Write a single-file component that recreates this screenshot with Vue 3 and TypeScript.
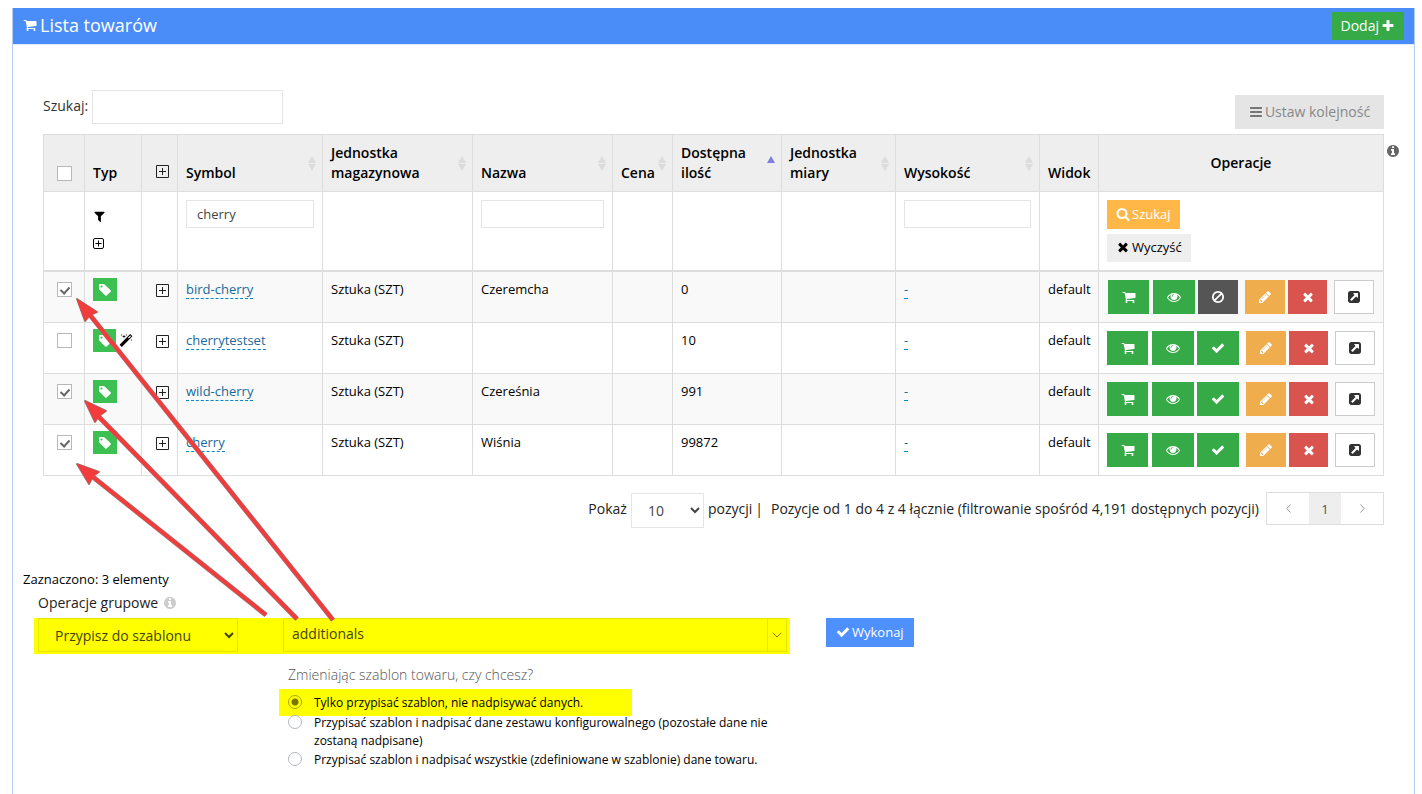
<script setup lang="ts">
import { reactive, ref } from 'vue'

interface Product {
  symbol: string
  unit: string
  name: string
  quantity: string
  checked: boolean
  blocked: boolean
  configurable: boolean
}

interface Column {
  key: string
  label: string
  sort: '' | 'both' | 'asc'
}

const icons: Record<string, string> = {
  cart: 'M704 1536q0 52-38 90t-90 38-90-38-38-90 38-90 90-38 90 38 38 90zm896 0q0 52-38 90t-90 38-90-38-38-90 38-90 90-38 90 38 38 90zm128-1088v512q0 24-16.5 42.5t-40.5 21.5l-1044 122q13 60 13 70 0 16-24 64h920q26 0 45 19t19 45-19 45-45 19h-1024q-26 0-45-19t-19-45q0-11 8-31.5t16-36 21.5-40 15.5-29.5l-177-823h-204q-26 0-45-19t-19-45 19-45 45-19h256q16 0 28.5 6.5t19.5 15.5 13 24.5 8 26 5.5 29.5 4.5 26h1201q26 0 45 19t19 45z',
  plus: 'M1600 736v192q0 40-28 68t-68 28h-416v416q0 40-28 68t-68 28h-192q-40 0-68-28t-28-68v-416h-416q-40 0-68-28t-28-68v-192q0-40 28-68t68-28h416v-416q0-40 28-68t68-28h192q40 0 68 28t28 68v416h416q40 0 68 28t28 68z',
  bars: 'M1664 1344v128q0 26-19 45t-45 19h-1408q-26 0-45-19t-19-45v-128q0-26 19-45t45-19h1408q26 0 45 19t19 45zm0-512v128q0 26-19 45t-45 19h-1408q-26 0-45-19t-19-45v-128q0-26 19-45t45-19h1408q26 0 45 19t19 45zm0-512v128q0 26-19 45t-45 19h-1408q-26 0-45-19t-19-45v-128q0-26 19-45t45-19h1408q26 0 45 19t19 45z',
  info: 'M1152 1376v-160q0-14-9-23t-23-9h-96v-512q0-14-9-23t-23-9h-320q-14 0-23 9t-9 23v160q0 14 9 23t23 9h96v320h-96q-14 0-23 9t-9 23v160q0 14 9 23t23 9h448q14 0 23-9t9-23zm-128-896v-160q0-14-9-23t-23-9h-192q-14 0-23 9t-9 23v160q0 14 9 23t23 9h192q14 0 23-9t9-23zm640 416q0 209-103 385.5t-279.5 279.5-385.5 103-385.5-103-279.5-279.5-103-385.5 103-385.5 279.5-279.5 385.5-103 385.5 103 279.5 279.5 103 385.5z',
  search: 'M1216 832q0-185-131.5-316.5t-316.5-131.5-316.5 131.5-131.5 316.5 131.5 316.5 316.5 131.5 316.5-131.5 131.5-316.5zm512 832q0 52-38 90t-90 38q-54 0-90-38l-343-342q-179 124-399 124-143 0-273.5-55.5t-225-150-150-225-55.5-273.5 55.5-273.5 150-225 225-150 273.5-55.5 273.5 55.5 225 150 150 225 55.5 273.5q0 220-124 399l343 343q37 37 37 90z',
  times: 'M1490 1322q0 40-28 68l-136 136q-28 28-68 28t-68-28l-294-294-294 294q-28 28-68 28t-68-28l-136-136q-28-28-28-68t28-68l294-294-294-294q-28-28-28-68t28-68l136-136q28-28 68-28t68 28l294 294 294-294q28-28 68-28t68 28l136 136q28 28 28 68t-28 68l-294 294 294 294q28 28 28 68z',
  check: 'M1671 566q0 40-28 68l-724 724-136 136q-28 28-68 28t-68-28l-136-136-362-362q-28-28-28-68t28-68l136-136q28-28 68-28t68 28l294 295 656-657q28-28 68-28t68 28l136 136q28 28 28 68z',
  eye: 'M1664 960q-152-236-381-353 61 104 61 225 0 185-131.5 316.5t-316.5 131.5-316.5-131.5-131.5-316.5q0-121 61-225-229 117-381 353 133 205 333.5 326.5t434.5 121.5 434.5-121.5 333.5-326.5zm-720-384q0-20-14-34t-34-14q-125 0-214.5 89.5t-89.5 214.5q0 20 14 34t34 14 34-14 14-34q0-86 61-147t147-61q20 0 34-14t14-34zm848 384q0 34-20 69-140 230-376.5 368.5t-499.5 138.5-499.5-139-376.5-368q-20-35-20-69t20-69q140-229 376.5-368t499.5-139 499.5 139 376.5 368q20 35 20 69z',
  ban: 'M1440 893q0-161-87-295l-754 753q137 89 297 89 111 0 211.5-43.5t173.5-116.5 116-174.5 43-212.5zm-999 299l755-754q-135-91-300-91-148 0-273 73t-198 199-73 274q0 162 89 299zm1223-299q0 157-61 300t-163.5 246-245 164-298.5 61-298.5-61-245-164-163.5-246-61-300 61-299.5 163.5-245.5 245-164 298.5-61 298.5 61 245 164 163.5 245.5 61 299.5z',
  pencil: 'M491 1536l91-91-235-235-91 91v107h128v128h107zm523-928q0-22-22-22-10 0-17 7l-542 542q-7 7-7 17 0 22 22 22 10 0 17-7l542-542q7-7 7-17zm-54-192l416 416-832 832h-416v-416zm683 96q0 53-37 90l-166 166-416-416 166-165q36-38 90-38 53 0 91 38l235 234q37 39 37 91z',
  external: 'M1408 928v-480q0-26-19-45t-45-19h-480q-42 0-59 39-17 41 14 70l144 144-534 534q-19 19-19 45t19 45l102 102q19 19 45 19t45-19l534-534 144 144q18 19 45 19 12 0 25-5 39-17 39-59zm256-512v960q0 119-84.5 203.5t-203.5 84.5h-960q-119 0-203.5-84.5t-84.5-203.5v-960q0-119 84.5-203.5t203.5-84.5h960q119 0 203.5 84.5t84.5 203.5z',
  tag: 'M576 448q0-53-37.5-90.5t-90.5-37.5-90.5 37.5-37.5 90.5 37.5 90.5 90.5 37.5 90.5-37.5 37.5-90.5zm1067 576q0 53-37 90l-491 492q-39 37-91 37-53 0-90-37l-715-716q-38-37-64.5-101t-26.5-117v-416q0-52 38-90t90-38h416q53 0 117 26.5t102 64.5l715 714q37 39 37 91z',
  filter: 'M1595 295q17 41-14 70l-493 493v742q0 42-39 59-13 5-25 5-27 0-45-19l-256-256q-19-19-19-45v-486l-493-493q-31-29-14-70 17-39 59-39h1280q42 0 59 39z',
  magic: 'M1254 581l293-293-107-107-293 293zm447-293q0 27-18 45l-1286 1286q-18 18-45 18t-45-18l-198-198q-18-18-18-45t18-45l1286-1286q18-18 45-18t45 18l198 198q18 18 18 45zm-1351-190l98 30-98 30-30 98-30-98-98-30 98-30 30-98zm350 162l196 60-196 60-60 196-60-196-196-60 196-60 60-196zm930 478l98 30-98 30-30 98-30-98-98-30 98-30 30-98zm-640-640l98 30-98 30-30 98-30-98-98-30 98-30 30-98z',
}

const columns: Column[] = [
  { key: 'symbol', label: 'Symbol', sort: 'both' },
  { key: 'unit', label: 'Jednostka magazynowa', sort: 'both' },
  { key: 'name', label: 'Nazwa', sort: 'both' },
  { key: 'price', label: 'Cena', sort: 'both' },
  { key: 'quantity', label: 'Dostępna ilość', sort: 'asc' },
  { key: 'measure', label: 'Jednostka miary', sort: 'both' },
  { key: 'height', label: 'Wysokość', sort: 'both' },
  { key: 'view', label: 'Widok', sort: '' },
]

const products = reactive<Product[]>([
  { symbol: 'bird-cherry', unit: 'Sztuka (SZT)', name: 'Czeremcha', quantity: '0', checked: true, blocked: true, configurable: false },
  { symbol: 'cherrytestset', unit: 'Sztuka (SZT)', name: '', quantity: '10', checked: false, blocked: false, configurable: true },
  { symbol: 'wild-cherry', unit: 'Sztuka (SZT)', name: 'Czereśnia', quantity: '991', checked: true, blocked: false, configurable: false },
  { symbol: 'cherry', unit: 'Sztuka (SZT)', name: 'Wiśnia', quantity: '99872', checked: true, blocked: false, configurable: false },
])

const modes = [
  'Tylko przypisać szablon, nie nadpisywać danych.',
  'Przypisać szablon i nadpisać dane zestawu konfigurowalnego (pozostałe dane nie zostaną nadpisane)',
  'Przypisać szablon i nadpisać wszystkie (zdefiniowane w szablonie) dane towaru.',
]
const mode = ref(0)
const query = ref('')
const symbolFilter = ref('cherry')
const template = ref('additionals')

const arrows = [
  { line: 'M333 620L90 315', head: 'M77 299L97 312L90 315L85 321Z' },
  { line: 'M297 619L98 416', head: 'M85 401L106 411L99 416L95 422Z' },
  { line: 'M266 615L93 477', head: 'M77 464L99 472L93 476L89 484Z' },
]
</script>

<template>
  <main class="panel">
    <header class="panel-head">
      <h1><svg class="ico" viewBox="0 0 1792 1792"><path :d="icons.cart" /></svg>Lista towarów</h1>
      <button class="btn add" type="button">Dodaj<svg class="ico" viewBox="0 0 1792 1792"><path :d="icons.plus" /></svg></button>
    </header>

    <section class="listing">
      <div class="toolbar">
        <label class="search">Szukaj:<input v-model="query" type="text" /></label>
        <button class="btn order" type="button" disabled>
          <svg class="ico" viewBox="0 0 1792 1792"><path :d="icons.bars" /></svg>Ustaw kolejność
        </button>
      </div>

      <div class="table-wrap">
        <table>
          <colgroup>
            <col class="c-check" /><col class="c-type" /><col class="c-more" />
            <col v-for="c in columns" :key="c.key" :class="'c-' + c.key" />
            <col />
          </colgroup>
          <thead>
            <tr class="titles">
              <th class="center"><input type="checkbox" aria-label="Zaznacz wszystkie" /></th>
              <th>Typ</th>
              <th class="more">
                <button class="expand" type="button" aria-label="Rozwiń wszystkie"><svg viewBox="0 0 13 13"><path d="M.5 .5h12v12h-12zM3 6.5h7M6.5 3v7" /></svg></button>
              </th>
              <th v-for="c in columns" :key="c.key" :class="{ sortable: c.sort }">
                {{ c.label }}
                <svg v-if="c.sort" class="sort" :class="c.sort" viewBox="0 0 8 15">
                  <path d="M4 0L8 7H0z" /><path v-if="c.sort === 'both'" d="M4 15L8 8H0z" />
                </svg>
              </th>
              <th class="ops-title">Operacje</th>
            </tr>
            <tr class="filters">
              <td></td>
              <td>
                <div class="filter-icons">
                  <button type="button" aria-label="Filtruj"><svg class="ico" viewBox="0 0 1792 1792"><path :d="icons.filter" /></svg></button>
                  <button type="button" aria-label="Rozwiń"><svg class="box" viewBox="0 0 11 11"><rect x=".5" y=".5" width="10" height="10" rx="1.5" /><path d="M2.5 5.5h6M5.5 2.5v6" /></svg></button>
                </div>
              </td>
              <td></td>
              <td><input v-model="symbolFilter" type="text" aria-label="Symbol" /></td>
              <td></td>
              <td><input type="text" aria-label="Nazwa" /></td>
              <td></td>
              <td></td>
              <td></td>
              <td><input type="text" aria-label="Wysokość" /></td>
              <td></td>
              <td>
                <div class="filter-actions">
                  <button class="btn find" type="button"><svg class="ico" viewBox="0 0 1792 1792"><path :d="icons.search" /></svg>Szukaj</button>
                  <button class="btn clear" type="button"><svg class="ico" viewBox="0 0 1792 1792"><path :d="icons.times" /></svg>Wyczyść</button>
                </div>
              </td>
            </tr>
          </thead>
          <tbody>
            <tr v-for="p in products" :key="p.symbol">
              <td class="center"><input v-model="p.checked" type="checkbox" :aria-label="p.symbol" /></td>
              <td class="type">
                <div class="type-icons">
                  <span class="tag"><svg class="ico" viewBox="0 0 1792 1792"><path :d="icons.tag" /></svg></span>
                  <svg v-if="p.configurable" class="ico wand" viewBox="0 0 1792 1792"><path :d="icons.magic" /></svg>
                </div>
              </td>
              <td class="more">
                <button class="expand" type="button" aria-label="Rozwiń"><svg viewBox="0 0 13 13"><path d="M.5 .5h12v12h-12zM3 6.5h7M6.5 3v7" /></svg></button>
              </td>
              <td><a href="#">{{ p.symbol }}</a></td>
              <td>{{ p.unit }}</td>
              <td>{{ p.name }}</td>
              <td></td>
              <td>{{ p.quantity }}</td>
              <td></td>
              <td><a href="#">-</a></td>
              <td>default</td>
              <td>
                <div class="ops">
                  <button class="op green cart" type="button" aria-label="Koszyk"><svg class="ico" viewBox="0 0 1792 1792"><path :d="icons.cart" /></svg></button>
                  <button class="op green view" type="button" aria-label="Podgląd"><svg class="ico" viewBox="0 0 1792 1792"><path :d="icons.eye" /></svg></button>
                  <button class="op" :class="p.blocked ? 'dark' : 'green state'" type="button" aria-label="Status"><svg class="ico" viewBox="0 0 1792 1792"><path :d="p.blocked ? icons.ban : icons.check" /></svg></button>
                  <button class="op amber" type="button" aria-label="Edytuj"><svg class="ico" viewBox="0 0 1792 1792"><path :d="icons.pencil" /></svg></button>
                  <button class="op red" type="button" aria-label="Usuń"><svg class="ico" viewBox="0 0 1792 1792"><path :d="icons.times" /></svg></button>
                  <button class="op plain" type="button" aria-label="Otwórz"><svg class="ico" viewBox="0 0 1792 1792"><path :d="icons.external" /></svg></button>
                </div>
              </td>
            </tr>
          </tbody>
        </table>
        <svg class="ico table-info" viewBox="0 0 1792 1792"><path :d="icons.info" /></svg>
      </div>

      <div class="pager">
        <label class="size">Pokaż <select><option>10</option></select> pozycji</label>
        <span class="bar">|</span>
        <span class="summary">Pozycje od 1 do 4 z 4 łącznie (filtrowanie spośród 4,191 dostępnych pozycji)</span>
        <nav class="pages">
          <button type="button" aria-label="Poprzednia"><svg viewBox="0 0 5 9"><path d="M4.500 .5L.8 4.500L4.500 8.500" /></svg></button>
          <button class="current" type="button">1</button>
          <button type="button" aria-label="Następna"><svg viewBox="0 0 5 9"><path d="M.5 .5L4.200 4.500L.5 8.500" /></svg></button>
        </nav>
      </div>
    </section>

    <section class="bulk">
      <p class="selected">Zaznaczono: 3 elementy</p>
      <label class="bulk-label" for="operation">Operacje grupowe<svg class="ico" viewBox="0 0 1792 1792"><path :d="icons.info" /></svg></label>
      <div class="bulk-row">
        <div class="marked">
          <select id="operation"><option>Przypisz do szablonu</option></select>
          <div class="combo">
            <input v-model="template" type="text" role="combobox" aria-expanded="false" aria-label="Szablon" />
            <button type="button" aria-label="Rozwiń listę"><svg viewBox="0 0 10 6"><path d="M.8 .8L5 5L9.200 .8" /></svg></button>
          </div>
        </div>
        <button class="btn run" type="button"><svg class="ico" viewBox="0 0 1792 1792"><path :d="icons.check" /></svg>Wykonaj</button>
      </div>
      <fieldset>
        <legend>Zmieniając szablon towaru, czy chcesz?</legend>
        <label v-for="(m, i) in modes" :key="i" :class="{ chosen: mode === i }">
          <input v-model="mode" type="radio" name="mode" :value="i" /><span>{{ m }}</span>
        </label>
      </fieldset>
    </section>

    <svg class="arrows" viewBox="0 0 360 640" aria-hidden="true">
      <g v-for="(a, i) in arrows" :key="i">
        <path class="shade" :d="a.line" /><path class="shade tip" :d="a.head" />
        <path class="shaft" :d="a.line" /><path class="shaft tip" :d="a.head" />
      </g>
    </svg>
  </main>
</template>

<style>
body {
  margin: 0;
  background: #fff;
}
</style>

<style scoped>
.panel,
.panel * {
  box-sizing: border-box;
}
.panel {
  margin: 8px 7px 0 12px;
  min-height: calc(100vh - 8px);
  border: solid #b3cdf5;
  border-width: 0 1px;
  font: 13px/20px "Open Sans", "Noto Sans", sans-serif;
  color: #000;
}
button,
input,
select {
  margin: 0;
  font: inherit;
  color: inherit;
  border-radius: 0;
}
button {
  padding: 0;
  border: 0;
  background: none;
}
.ico {
  width: 14px;
  height: 14px;
  fill: currentColor;
  flex: none;
}
.btn {
  display: inline-flex;
  align-items: center;
  justify-content: center;
  gap: 2px;
}
.panel-head {
  display: flex;
  align-items: center;
  justify-content: space-between;
  height: 37px;
  padding: 0 10px 1px;
  background: #4b8df8;
  border-bottom: 1px solid #e3ebf7;
  color: #fff;
}
h1 {
  display: flex;
  align-items: center;
  gap: 3px;
  margin: 0;
  padding-bottom: 2px;
  font-size: 18px;
  font-weight: 400;
  line-height: 24px;
}
.add {
  height: 28px;
  padding: 0 9px;
  background: #35aa47;
  font-size: 14px;
}
.listing {
  padding: 45px 30px 0;
}
.toolbar {
  display: flex;
  justify-content: space-between;
  height: 44px;
  font-size: 14px;
}
.search {
  display: flex;
  gap: 4px;
  height: 34px;
  line-height: 32px;
  color: #333;
}
.search input {
  width: 191px;
  height: 34px;
}
input[type='text'] {
  padding: 0 10px;
  border: 1px solid #e5e5e5;
  background: #fff;
  outline: 0;
}
.order {
  width: 149px;
  height: 34px;
  margin-top: 5px;
  background: #e5e5e5;
  color: #888;
}
.order .ico {
  fill: #777;
}
.table-wrap {
  position: relative;
}
.table-info {
  position: absolute;
  left: calc(100% + 2px);
  top: 10px;
  fill: #666;
}
table {
  width: 100%;
  table-layout: fixed;
  border-collapse: collapse;
}
.c-check { width: 41px; }
.c-type { width: 57px; }
.c-more { width: 36px; }
.c-symbol { width: 145px; }
.c-unit { width: 150px; }
.c-name { width: 140px; }
.c-price { width: 60px; }
.c-quantity { width: 109px; }
.c-measure { width: 114px; }
.c-height { width: 144px; }
.c-view { width: 59px; }
th,
td {
  padding: 8px;
  border: 1px solid #ddd;
  text-align: left;
  vertical-align: top;
}
td {
  line-height: 18px;
}
th {
  position: relative;
  background: #eee;
  font-size: 14px;
  font-weight: 600;
  vertical-align: bottom;
}
th.sortable {
  padding-right: 16px;
}
.ops-title {
  text-align: center;
  vertical-align: middle;
}
.sort {
  position: absolute;
  right: 6px;
  top: 21px;
  width: 8px;
  height: 15px;
  fill: #dcdcdc;
}
.sort.asc {
  fill: #7b7fe0;
}
.filters td {
  border-bottom: 2px solid #ddd;
}
.filters input {
  display: block;
  width: 100%;
  height: 28px;
  color: #444;
}
.filter-icons {
  display: flex;
  flex-direction: column;
  align-items: flex-start;
  gap: 15px;
  padding-top: 10px;
}
.filter-icons button,
.expand {
  display: flex;
}
.filter-icons .ico {
  width: 13px;
  height: 13px;
}
.box {
  width: 11px;
  height: 11px;
  fill: none;
  stroke: #000;
}
.filter-actions {
  display: flex;
  flex-direction: column;
  align-items: flex-start;
  gap: 5px;
}
.find,
.clear {
  height: 29px;
  padding: 0 9px 2px;
}
.find {
  background: #ffb848;
  color: #fff;
}
.clear {
  height: 28px;
  background: #eee;
}
tbody tr:nth-child(odd) {
  background: #f9f9f9;
}
.center {
  text-align: center;
}
input[type='checkbox'] {
  appearance: none;
  display: block;
  width: 15px;
  height: 15px;
  margin: 2px auto;
  border: 1px solid #b4b9be;
  background: #fff;
  position: relative;
}
input[type='checkbox']:checked::after {
  content: '';
  position: absolute;
  left: 4px;
  top: 2px;
  width: 4px;
  height: 8px;
  border: solid #666;
  border-width: 0 2px 2px 0;
  box-sizing: border-box;
  width: 6px;
  height: 9px;
  transform: rotate(42deg);
}
.expand {
  width: 13px;
  height: 13px;
  margin: 4px 0 4px auto;
}
th .expand {
  margin-top: 3px;
  margin-bottom: 5px;
}
.expand svg {
  width: 13px;
  height: 13px;
  fill: none;
  stroke: #222;
}
.type {
  padding-top: 6px;
}
.type-icons {
  display: flex;
  align-items: center;
  gap: 3px;
}
.tag {
  display: flex;
  align-items: center;
  justify-content: center;
  width: 24px;
  height: 23px;
  background: #3cc051;
  color: #fff;
}
a {
  color: #1a6a9c;
  text-decoration: none;
  border-bottom: 1px dashed #08c;
}
.ops {
  display: flex;
  justify-content: center;
  gap: 3px;
}
.op {
  display: flex;
  align-items: center;
  justify-content: center;
  width: 40px;
  height: 34px;
  color: #fff;
}
.cart { width: 41px; margin-right: 1px; }
.view,
.state { width: 42px; }
.green { background: #35aa47; }
.dark { background: #555; }
.amber { margin-left: 4px; background: #f0ad4e; }
.red { width: 39px; background: #d9534f; }
.plain {
  margin-left: 4px;
  border: 1px solid #ccc;
  background: #fff;
  color: #333;
}
.pager {
  display: flex;
  justify-content: flex-end;
  align-items: flex-start;
  margin-top: 16px;
  font-size: 14px;
  line-height: 34px;
  white-space: nowrap;
  color: #222;
}
.size {
  display: flex;
  gap: 4px;
}
.size select {
  width: 73px;
  height: 35px;
  margin-top: 1px;
  padding: 0 12px;
  border: 1px solid #e5e5e5;
  background: #fff;
  color: #444;
}
.bar {
  margin: 0 8px 0 3px;
}
.pages {
  display: flex;
  height: 33px;
  margin-left: 7px;
  border: 1px solid #ddd;
}
.pages button {
  display: flex;
  align-items: center;
  justify-content: center;
  width: 42px;
  font-size: 13px;
  color: #555;
}
.pages .current {
  width: 32px;
  background: #eee;
}
.pages svg {
  width: 5px;
  height: 9px;
  fill: none;
  stroke: #999;
}
.bulk {
  padding: 41px 10px 20px;
}
.selected {
  margin: 0;
}
.bulk-label {
  display: flex;
  align-items: center;
  gap: 5px;
  height: 29px;
  padding-bottom: 2px;
  margin-left: 15px;
  font-size: 14px;
  color: #222;
}
.bulk-label .ico {
  fill: #ccc;
}
.bulk-row {
  display: flex;
  align-items: flex-start;
  gap: 36px;
  margin-left: 11px;
}
.marked {
  display: flex;
  justify-content: space-between;
  width: 756px;
  height: 36px;
  padding: 0 3px 0 4px;
  background: #ff0;
  font-size: 14px;
  color: #444400;
}
.marked select {
  width: 200px;
  height: 34px;
  padding: 0 12px;
  border: 1px solid #e5e500;
  background: #ff0;
}
.combo {
  display: flex;
  width: 504px;
  height: 34px;
  border: 1px solid #e5e500;
}
.combo input[type='text'] {
  flex: 1;
  min-width: 0;
  padding: 0 8px 2px;
  border: 0;
  background: none;
}
.combo button {
  display: flex;
  align-items: center;
  justify-content: center;
  width: 19px;
  border-left: 1px solid #e5e500;
}
.combo svg {
  width: 10px;
  height: 6px;
  fill: none;
  stroke: #777700;
}
.run {
  height: 29px;
  padding: 0 10px 2px;
  background: #4d90fe;
  color: #fff;
}
fieldset {
  width: 509px;
  margin: 10px 0 0 256px;
  padding: 0;
  border: 0;
}
legend {
  margin-bottom: 4px;
  padding: 0 9px;
  font-size: 14px;
  font-weight: 300;
  line-height: 22px;
  color: #555;
}
fieldset label {
  display: flex;
  align-items: flex-start;
  gap: 12px;
  padding: 1px 9px 0;
  font-size: 12px;
  line-height: 18px;
}
fieldset .chosen {
  width: 353px;
  height: 27px;
  margin-top: -1px;
  margin-bottom: -3px;
  padding-top: 5px;
  background: #ff0;
}
input[type='radio'] {
  appearance: none;
  flex: none;
  width: 14px;
  height: 14px;
  margin-top: 1px;
  border: 1px solid #b4b9be;
  border-radius: 50%;
}
input[type='radio']:checked {
  border-color: #aaaa00;
  background: radial-gradient(circle, #777700 3px, transparent 4px);
}
.arrows {
  position: absolute;
  left: 0;
  top: 0;
  width: 360px;
  height: 640px;
  fill: none;
  pointer-events: none;
}
.shade {
  stroke: #8a8a8a;
  stroke-width: 5;
  stroke-linejoin: round;
}
.shaft {
  stroke: #f23c3c;
  stroke-width: 4;
  stroke-linejoin: round;
}
.shade.tip {
  stroke-width: 2;
}
.shaft.tip {
  fill: #f23c3c;
  stroke-width: 1;
}
</style>
